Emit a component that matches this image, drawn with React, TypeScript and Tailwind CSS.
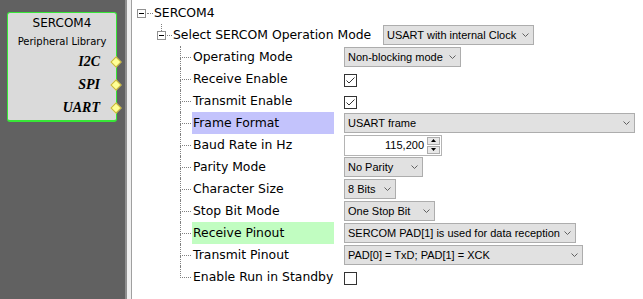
import React from "react";

const Chevron = () => (
  <svg width="7" height="4" viewBox="0 0 7 4" className="shrink-0">
    <polyline points="0.5,0.5 3.5,3.5 6.5,0.5" fill="none" stroke="#606060" strokeWidth="1" />
  </svg>
);

const Dropdown = ({ w, text }: { w: string; text: string }) => (
  <div
    className={`flex h-[20px] items-center justify-between border border-[#adadad] bg-[#e1e1e1] pl-[3px] pr-[4px] font-['Liberation_Sans',sans-serif] text-[11px] text-black ${w}`}
  >
    <span className="whitespace-nowrap">{text}</span>
    <Chevron />
  </div>
);

const Checkbox = ({ checked }: { checked?: boolean }) => (
  <div className="mt-[2px] flex h-[13px] w-[13px] items-center justify-center border border-[#333333] bg-white">
    {checked && (
      <svg width="11" height="11" viewBox="0 0 11 11">
        <polyline points="1.5,5.5 4,8 9.5,2.5" fill="none" stroke="#333333" strokeWidth="1" />
      </svg>
    )}
  </div>
);

const Spinner = ({ value }: { value: string }) => (
  <div className="flex h-[21px] w-[98px] items-center border border-[#b4b4b4] bg-white font-['Liberation_Sans',sans-serif] text-[11px] text-black">
    <span className="flex-1 pr-[3px] text-right">{value}</span>
    <div className="mr-[1px] flex h-full w-[13px] flex-col gap-px py-[1px]">
      <div className="flex flex-1 items-center justify-center border border-[#adadad] bg-[#e8e8e8]">
        <svg width="5" height="3" viewBox="0 0 5 3">
          <polygon points="2.5,0 5,3 0,3" fill="#000" />
        </svg>
      </div>
      <div className="flex flex-1 items-center justify-center border border-[#adadad] bg-[#e8e8e8]">
        <svg width="5" height="3" viewBox="0 0 5 3">
          <polygon points="0,0 5,0 2.5,3" fill="#000" />
        </svg>
      </div>
    </div>
  </div>
);

const ExpandBox = () => (
  <div className="flex h-[9px] w-[9px] shrink-0 items-center justify-center border border-[#919191] bg-white">
    <div className="h-px w-[5px] bg-black" />
  </div>
);

type Leaf = {
  label: string;
  hl?: string;
  control: React.ReactNode;
};

const leaves: Leaf[] = [
  { label: "Operating Mode", control: <Dropdown w="w-[117px]" text="Non-blocking mode" /> },
  { label: "Receive Enable", control: <Checkbox checked /> },
  { label: "Transmit Enable", control: <Checkbox checked /> },
  { label: "Frame Format", hl: "bg-[#c3c3fc]", control: <Dropdown w="w-[291px]" text="USART frame" /> },
  { label: "Baud Rate in Hz", control: <Spinner value="115,200" /> },
  { label: "Parity Mode", control: <Dropdown w="w-[79px]" text="No Parity" /> },
  { label: "Character Size", control: <Dropdown w="w-[52px]" text="8 Bits" /> },
  { label: "Stop Bit Mode", control: <Dropdown w="w-[91px]" text="One Stop Bit" /> },
  {
    label: "Receive Pinout",
    hl: "bg-[#c1fdc1]",
    control: <Dropdown w="w-[232px]" text="SERCOM PAD[1] is used for data reception" />,
  },
  { label: "Transmit Pinout", control: <Dropdown w="w-[239px]" text="PAD[0] = TxD; PAD[1] = XCK" /> },
  { label: "Enable Run in Standby", control: <Checkbox /> },
];

function Port({ name }: { name: string }) {
  return (
    <div className="flex h-[23px] items-center justify-end">
      <span className="font-['Liberation_Serif',serif] text-[14px] font-bold italic text-black">{name}</span>
      <div className="ml-[12px] mr-[-4px] h-[8px] w-[8px] rotate-45 border border-[#c9b53a] bg-[#ffff96]" />
    </div>
  );
}

export default function App() {
  return (
    <div className="flex h-[299px] w-[643px] overflow-hidden bg-white">
      {/* component canvas */}
      <div className="w-[125px] shrink-0 bg-[#616161] pl-[7px] pt-[12px]">
        <div className="flex h-[110px] w-[110px] flex-col rounded-[3px] border border-b-2 border-[#37e637] bg-[#dadada] text-black">
          <div className="text-center font-['DejaVu_Sans',sans-serif] text-[12px] leading-[20px]">SERCOM4</div>
          <div className="text-center font-['DejaVu_Sans',sans-serif] text-[10px] leading-[17px]">Peripheral Library</div>
          <Port name="I2C" />
          <Port name="SPI" />
          <Port name="UART" />
        </div>
      </div>

      {/* splitter */}
      <div className="w-[2px] shrink-0 bg-[#8f8f8f]" />
      <div className="w-[4px] shrink-0 bg-[#efefef]" />
      <div className="w-px shrink-0 bg-[#a0a0a0]" />

      {/* configuration tree */}
      <div className="flex-1 pt-[2px] font-['DejaVu_Sans',sans-serif] text-[12.4px] text-black">
        <div className="flex h-[22px] items-center pl-[5px]">
          <ExpandBox />
          <div className="ml-[1px] w-[6px] border-t border-dotted border-[#808080]" />
          <span className="ml-[1px] whitespace-nowrap">SERCOM4</span>
        </div>

        <div className="flex h-[22px] items-center pl-[25px]">
          <div className="flex h-full w-[9px] flex-col items-center">
            <div className="w-0 flex-1 border-l border-dotted border-[#808080]" />
            <ExpandBox />
            <div className="flex-1" />
          </div>
          <div className="ml-[1px] w-[5px] border-t border-dotted border-[#808080]" />
          <span className="ml-[1px] w-[210px] whitespace-nowrap">Select SERCOM Operation Mode</span>
          <Dropdown w="w-[151px]" text="USART with internal Clock" />
        </div>

        {leaves.map((leaf, i) => (
          <div key={leaf.label} className="flex h-[22px] items-center pl-[48px]">
            <div className="flex h-full w-[11px] flex-col">
              <div className="h-[12px] border-b border-l border-dotted border-[#808080]" />
              <div className={`h-[10px] border-dotted border-[#808080] ${i < leaves.length - 1 ? "border-l" : ""}`} />
            </div>
            <div className={`ml-[1px] flex h-full w-[142px] items-center whitespace-nowrap pl-[1px] ${leaf.hl ?? ""}`}>
              {leaf.label}
            </div>
            <div className="ml-[10px] flex items-center">{leaf.control}</div>
          </div>
        ))}
      </div>
    </div>
  );
}
